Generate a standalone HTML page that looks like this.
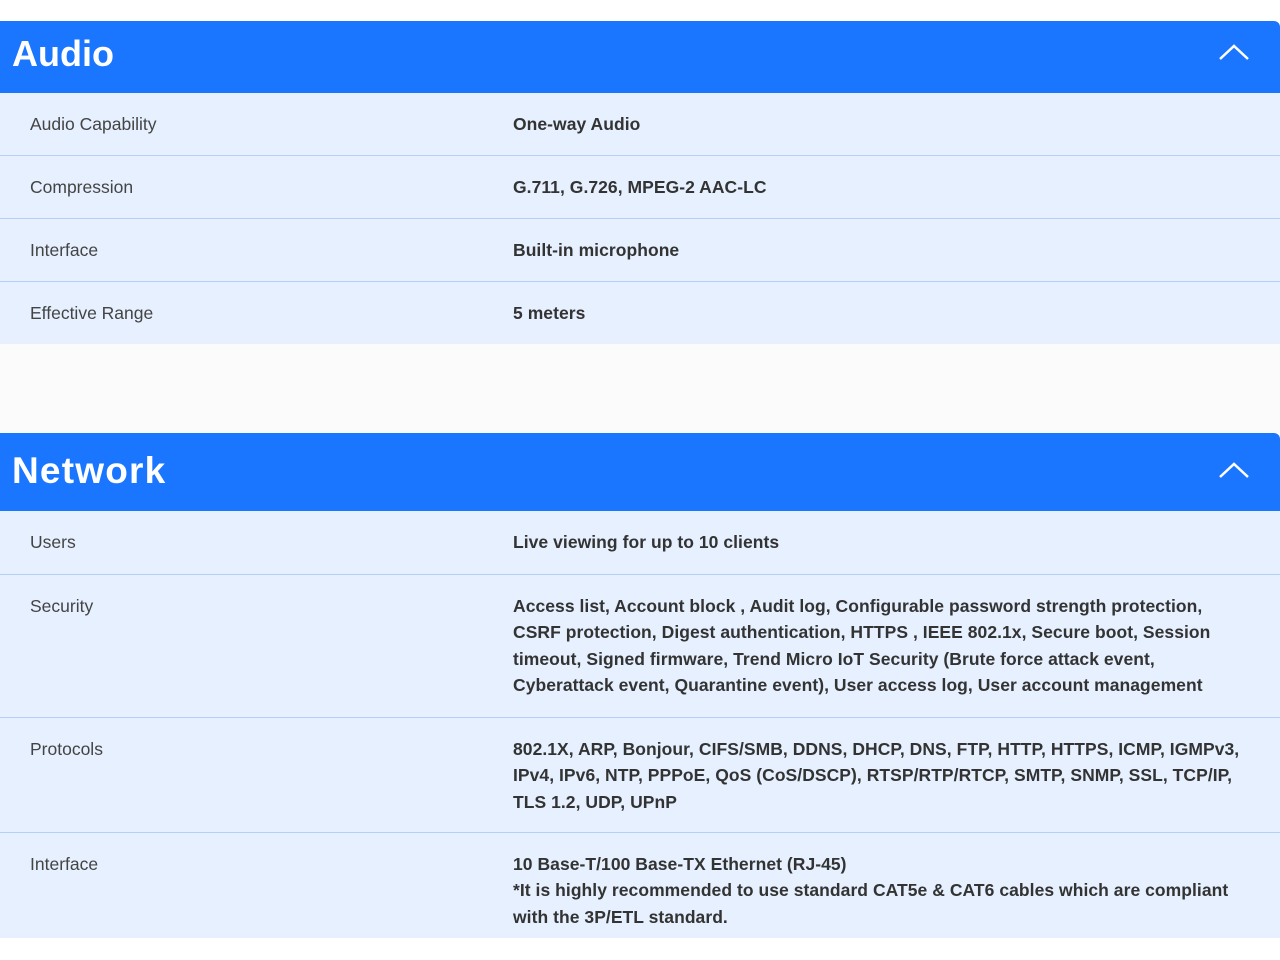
<!DOCTYPE html>
<html><head><style>
body{margin:0;width:1280px;height:960px;background:#fff;font-family:"Liberation Sans",sans-serif;overflow:hidden}
.hd{position:absolute;left:0;width:1280px;background:#1a76ff;color:#fff;font-weight:bold;border-top-right-radius:6px}
.hd span{position:absolute;left:12px;font-size:36px}
.hd svg{position:absolute;right:30px}
.row{position:absolute;left:0;width:1280px;background:#e6f0fe;border-bottom:1px solid #b4d0f8;box-sizing:border-box;font-size:17.5px;color:#444}
.row .l{position:absolute;left:30px;top:18px;line-height:26.4px}
.row .v{position:absolute;left:513px;top:18px;line-height:26.4px;font-weight:bold;color:#333;white-space:nowrap;letter-spacing:0.05px}
</style></head><body>
<div style="position:absolute;top:344px;left:0;width:1280px;height:89px;background:#fbfbfc"></div>
<div class="hd" style="top:21px;height:72px"><span style="top:12px">Audio</span>
<svg style="top:22px" width="32" height="18" viewBox="0 0 32 18"><path d="M2 16L16 3L30 16" fill="none" stroke="#fff" stroke-width="2.5"/></svg></div>
<div class="row" style="top:93px;height:63px"><div class="l">Audio Capability</div><div class="v">One-way Audio</div></div>
<div class="row" style="top:156px;height:63px"><div class="l">Compression</div><div class="v">G.711, G.726, MPEG-2 AAC-LC</div></div>
<div class="row" style="top:219px;height:63px"><div class="l">Interface</div><div class="v">Built-in microphone</div></div>
<div class="row" style="top:282px;height:62px;border-bottom:none"><div class="l">Effective Range</div><div class="v">5 meters</div></div>
<div class="hd" style="top:433px;height:78px"><span style="top:17px;font-size:37px;letter-spacing:1.2px">Network</span>
<svg style="top:28px" width="32" height="18" viewBox="0 0 32 18"><path d="M2 16L16 3L30 16" fill="none" stroke="#fff" stroke-width="2.5"/></svg></div>
<div class="row" style="top:511px;height:64px"><div class="l">Users</div><div class="v">Live viewing for up to 10 clients</div></div>
<div class="row" style="top:575px;height:143px"><div class="l">Security</div><div class="v">Access list, Account block , Audit log, Configurable password strength protection,<br>CSRF protection, Digest authentication, HTTPS , IEEE 802.1x, Secure boot, Session<br>timeout, Signed firmware, Trend Micro IoT Security (Brute force attack event,<br>Cyberattack event, Quarantine event), User access log, User account management</div></div>
<div class="row" style="top:718px;height:115px"><div class="l">Protocols</div><div class="v">802.1X, ARP, Bonjour, CIFS/SMB, DDNS, DHCP, DNS, FTP, HTTP, HTTPS, ICMP, IGMPv3,<br>IPv4, IPv6, NTP, PPPoE, QoS (CoS/DSCP), RTSP/RTP/RTCP, SMTP, SNMP, SSL, TCP/IP,<br>TLS 1.2, UDP, UPnP</div></div>
<div class="row" style="top:833px;height:105px;border-bottom:none"><div class="l">Interface</div><div class="v">10 Base-T/100 Base-TX Ethernet (RJ-45)<br>*It is highly recommended to use standard CAT5e &amp; CAT6 cables which are compliant<br>with the 3P/ETL standard.</div></div>
</body></html>
